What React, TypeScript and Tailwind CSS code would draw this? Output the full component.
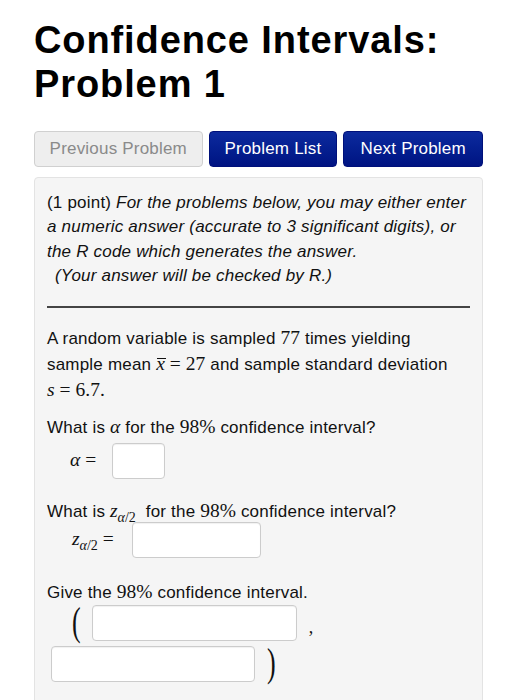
import React from 'react';

const sans = { fontFamily: '"Liberation Sans", Arial, sans-serif' };

function M({ children }: { children: React.ReactNode }) {
  return <span className="font-['Liberation_Serif',serif] text-[19.5px] tracking-normal">{children}</span>;
}

function Eq() {
  return <span className="mx-[5px] font-['Liberation_Serif',serif]">=</span>;
}

function Z() {
  return (
    <span className="font-['Liberation_Serif',serif] text-[19.5px] tracking-normal">
      <i>z</i>
      <span className="relative top-[5px] text-[14px]">
        <i>α</i>/2
      </span>
    </span>
  );
}

function Field({ w }: { w: string }) {
  return (
    <input
      type="text"
      className={`${w} h-[36px] rounded-[4px] border border-[#cccccc] bg-white shadow-[inset_0_1px_1px_rgba(0,0,0,0.06)] outline-none`}
    />
  );
}

export default function App() {
  return (
    <div className="min-h-[700px] bg-white px-[34px] pt-[18px] text-[#111]" style={sans}>
      <h1 className="text-[38px] font-bold leading-[44px] tracking-[0.9px] text-black">
        Confidence Intervals:
        <br />
        Problem 1
      </h1>

      <div className="mt-[25px] flex gap-[6px] text-[17px] tracking-[0.2px]">
        <button className="h-[36px] w-[169px] rounded-[4px] border border-[#d0d0d0] bg-[#eeeeee] text-[#8a8a8a]">
          Previous Problem
        </button>
        <button className="h-[36px] w-[129px] rounded-[4px] border border-[#00107a] bg-linear-to-b from-[#0d2a9e] to-[#001382] text-white">
          Problem List
        </button>
        <button className="h-[36px] w-[140px] rounded-[4px] border border-[#00107a] bg-linear-to-b from-[#0d2a9e] to-[#001382] text-white">
          Next Problem
        </button>
      </div>

      <div className="mt-[10px] w-[449px] rounded-[4px] border border-[#e3e3e3] bg-[#f5f5f5] px-[12px] pt-[12.5px] pb-[40px] text-[17px] leading-[24.6px] tracking-[0.2px]">
        <p>
          (1 point){' '}
          <i>
            For the problems below, you may either enter a numeric answer (accurate to 3 significant digits), or
            the R code which generates the answer.
          </i>
          <br />
          <span className="pl-[8px]">
            <i>(Your answer will be checked by R.)</i>
          </span>
        </p>

        <div className="mt-[17.5px] h-[2px] bg-[#444]" />

        <p className="mt-[18px]">
          A random variable is sampled <M>77</M> times yielding sample mean{' '}
          <M>
            <span className="relative">
              <i>x</i>
              <span className="absolute left-[1px] right-[-1px] top-[5px] h-[1px] bg-current" />
            </span>
            <Eq />
            27
          </M>{' '}
          and sample standard deviation{' '}
          <M>
            <i>s</i>
            <Eq />
            6.7.
          </M>
        </p>

        <p className="mt-[11.5px]">
          What is{' '}
          <M>
            <i>α</i>
          </M>{' '}
          for the <M>98%</M> confidence interval?
        </p>
        <div className="mt-[2.5px] flex items-center pl-[23px]">
          <span className="mr-[11px]">
            <M>
              <i>α</i>
              <Eq />
            </M>
          </span>
          <Field w="w-[53px]" />
        </div>

        <p className="mt-[20px]">
          What is <Z /> &nbsp;for the <M>98%</M> confidence interval?
        </p>
        <div className="mt-[-3px] flex items-center pl-[25px]">
          <span className="mr-[13px]">
            <Z />
            <M>
              <Eq />
            </M>
          </span>
          <Field w="w-[129px]" />
        </div>

        <p className="mt-[22px]">
          Give the <M>98%</M> confidence interval.
        </p>
        <div className="mt-[-0.5px] flex items-center">
          <span className="ml-[25px] mr-[11px] inline-block scale-y-[1.55] font-['Liberation_Serif',serif] text-[26px] leading-none">
            (
          </span>
          <Field w="w-[205px]" />
          <span className="ml-[12px] mt-[8px] font-['Liberation_Serif',serif] text-[18px]">,</span>
        </div>
        <div className="mt-[5px] flex items-center">
          <span className="ml-[4px]" />
          <Field w="w-[204px]" />
          <span className="ml-[12px] inline-block scale-y-[1.55] font-['Liberation_Serif',serif] text-[26px] leading-none">
            )
          </span>
        </div>
      </div>
    </div>
  );
}
